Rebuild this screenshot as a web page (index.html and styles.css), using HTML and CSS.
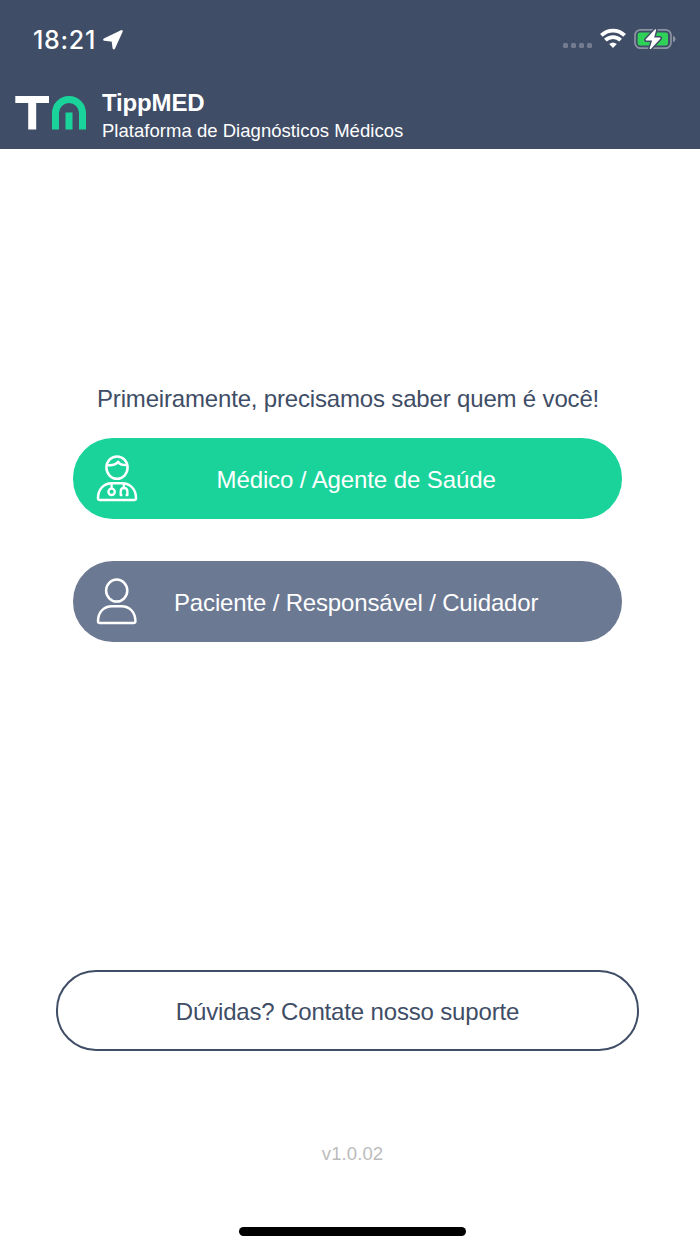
FILE: index.html
```html
<!DOCTYPE html>
<html lang="pt-BR">
<head>
	<meta charset="UTF-8">
	<meta name="viewport" content="width=device-width, initial-scale=1.0">
	<title>TippMED</title>
	<link rel="stylesheet" href="styles.css">
</head>
<body>
	<div class="status-bar">
		<div class="status-time">
			<span class="time">18:21</span>
			<svg class="location-icon" width="20" height="20" viewBox="0 0 20 20">
				<path d="M1.4 9.6 18.5 1.3 10.8 18.2 9.8 10.6Z" fill="#fff" stroke="#fff" stroke-width="2.5" stroke-linejoin="round"/>
			</svg>
		</div>
		<div class="status-icons">
			<div class="signal"><i></i><i></i><i></i><i></i></div>
			<svg class="wifi-icon" width="26" height="20" viewBox="0 0 26 20">
				<g fill="none" stroke="#fff" stroke-width="3.8">
					<path d="M1.4 7.4C8 .9 18 .9 24.6 7.4"/>
					<path d="M5.4 12.2C9.7 8 16.3 8 20.6 12.2"/>
				</g>
				<path d="M13 20 9.2 16Q13 12.8 16.8 16Z" fill="#fff"/>
			</svg>
			<svg class="battery-icon" width="42" height="22" viewBox="0 0 42 22">
				<rect x="1" y="1.8" width="36" height="18.4" rx="5.5" fill="none" stroke="#8c94a3" stroke-width="1.7"/>
				<path d="M39 7.7Q41.6 8.7 41.6 11T39 14.3Z" fill="#8c94a3"/>
				<rect x="3.6" y="4.5" width="30.4" height="13" rx="2.5" fill="#30d158"/>
				<path d="M21.4 2 12.3 11.8h6.8l-2.8 8.6L25.8 10.2h-6.6Z" fill="none" stroke="#404d66" stroke-width="4.4" stroke-linejoin="round"/>
				<path d="M21.4 2 12.3 11.8h6.8l-2.8 8.6L25.8 10.2h-6.6Z" fill="#fff" stroke="#fff" stroke-width="1.4" stroke-linejoin="round"/>
			</svg>
		</div>
	</div>

	<header class="header">
		<svg class="logo" width="72" height="34" viewBox="0 0 72 34">
			<path d="M.3 3.5H34" fill="none" stroke="#fff" stroke-width="7"/>
			<path d="M17.2 3.5V33.5" fill="none" stroke="#fff" stroke-width="8"/>
			<path d="M40.5 33.5V17a13.5 13.5 0 0 1 27 0V33.5M54 33.5V16.5" fill="none" stroke="#1ad39a" stroke-width="7"/>
		</svg>
		<div class="header-text">
			<h1>TippMED</h1>
			<p>Plataforma de Diagnósticos Médicos</p>
		</div>
	</header>

	<main class="content">
		<p class="question">Primeiramente, precisamos saber quem é você!</p>
		<button class="button doctor">
			<svg class="person-icon" width="42" height="48" viewBox="0 0 42 48">
				<ellipse cx="21" cy="12.6" rx="10.6" ry="11.2"/>
				<path d="M11 10Q18.5 11 22.2 6.8 24.5 10.5 31 10"/>
				<path d="M2 43.2C2 34 8 28.2 16 28.2H26C34 28.2 40 34 40 43.2Q40 45 38 45H4Q2 45 2 43.2Z"/>
				<g class="stethoscope">
					<path d="M15.6 28.5V33.5M27.8 28.5V33"/>
					<circle cx="15.6" cy="36.8" r="3.2"/>
					<path d="M26.4 40.2H24.7V36.5Q24.7 33 28 33T31.4 36.5V40.2H29.6"/>
				</g>
			</svg>
			<span>Médico / Agente de Saúde</span>
		</button>
		<button class="button patient">
			<svg class="person-icon" width="42" height="48" viewBox="0 0 42 48">
				<ellipse cx="20.7" cy="12.6" rx="10.6" ry="11"/>
				<path d="M2 43.2C2 34 8 28.2 16 28.2H25.4C33.4 28.2 39.4 34 39.4 43.2Q39.4 45 37.4 45H4Q2 45 2 43.2Z"/>
			</svg>
			<span>Paciente / Responsável / Cuidador</span>
		</button>
	</main>

	<footer class="footer">
		<button class="button support"><span>Dúvidas? Contate nosso suporte</span></button>
		<p class="version">v1.0.02</p>
		<div class="home-indicator"></div>
	</footer>
</body>
</html>
```
FILE: styles.css
```css
* {
	box-sizing: border-box;
}
body {
	font-family: "Liberation Sans", Arial, sans-serif;
	background-color: white;
	color: #404d66;
	display: flex;
	flex-direction: column;
	height: 1244px;
	margin: 0;
	overflow: hidden;
}
h1,
p {
	margin: 0;
	white-space: nowrap;
}
svg {
	display: block;
	flex: none;
}

.status-bar {
	display: flex;
	justify-content: space-between;
	height: 80px;
	padding: 24px 24px 0 33px;
	background-color: #404d66;
	color: white;
}
.status-time {
	display: flex;
	align-items: flex-start;
	gap: 7px;
}
.time {
	font-family: Inter, sans-serif;
	font-size: 25px;
	font-weight: 500;
	line-height: 32px;
	letter-spacing: 0.7px;
}
.location-icon {
	margin-top: 6px;
}
.status-icons {
	display: flex;
	align-items: flex-start;
}
.signal {
	display: flex;
	gap: 3px;
	margin: 19px 8px 0 0;
}
.signal i {
	width: 5px;
	height: 5px;
	border-radius: 1.5px;
	background-color: #737c8e;
}
.wifi-icon {
	margin: 4px 8px 0 0;
}
.battery-icon {
	margin-top: 4px;
}

.header {
	display: flex;
	height: 69px;
	padding: 10px 15px 0;
	background-color: #404d66;
	color: white;
}
.logo {
	margin-top: 6px;
}
.header-text {
	margin-left: 15px;
}
.header h1 {
	font-size: 24px;
	line-height: 26px;
	letter-spacing: -0.15px;
}
.header p {
	font-size: 18.5px;
	line-height: 29px;
	letter-spacing: 0.03px;
}

.content {
	flex: 1;
	padding: 235px 78px 0 73px;
}
.question {
	font-size: 24px;
	line-height: 30px;
	letter-spacing: -0.17px;
	margin: 0 0 24px 24px;
}
.button {
	display: flex;
	align-items: center;
	width: 100%;
	height: 81px;
	padding: 0;
	border: none;
	border-radius: 40px;
	color: white;
	font-family: inherit;
	font-size: 24px;
	line-height: 30px;
	letter-spacing: -0.16px;
	white-space: nowrap;
}
.button span {
	padding-top: 2px;
}
.person-icon {
	margin-left: 23px;
	fill: none;
	stroke: white;
	stroke-width: 2.5;
	stroke-linejoin: round;
}
.stethoscope {
	stroke-width: 2.3;
}
.doctor {
	background-color: #1ad39a;
	letter-spacing: -0.1px;
	margin-bottom: 42px;
}
.doctor span {
	margin-left: 78.5px;
}
.patient {
	background-color: #6c7993;
}
.patient span {
	margin-left: 36px;
}

.footer {
	height: 274px;
	padding: 0 61px 0 56px;
}
.support {
	justify-content: center;
	background-color: white;
	border: 2px solid #404d66;
	color: #404d66;
}
.version {
	margin-top: 91px;
	padding-left: 10px;
	font-size: 18.5px;
	line-height: 24px;
	letter-spacing: 0.1px;
	text-align: center;
	color: #bbb;
}
.home-indicator {
	width: 227px;
	height: 9px;
	margin: 61px 0 0 183px;
	border-radius: 5px;
	background-color: black;
}
```
